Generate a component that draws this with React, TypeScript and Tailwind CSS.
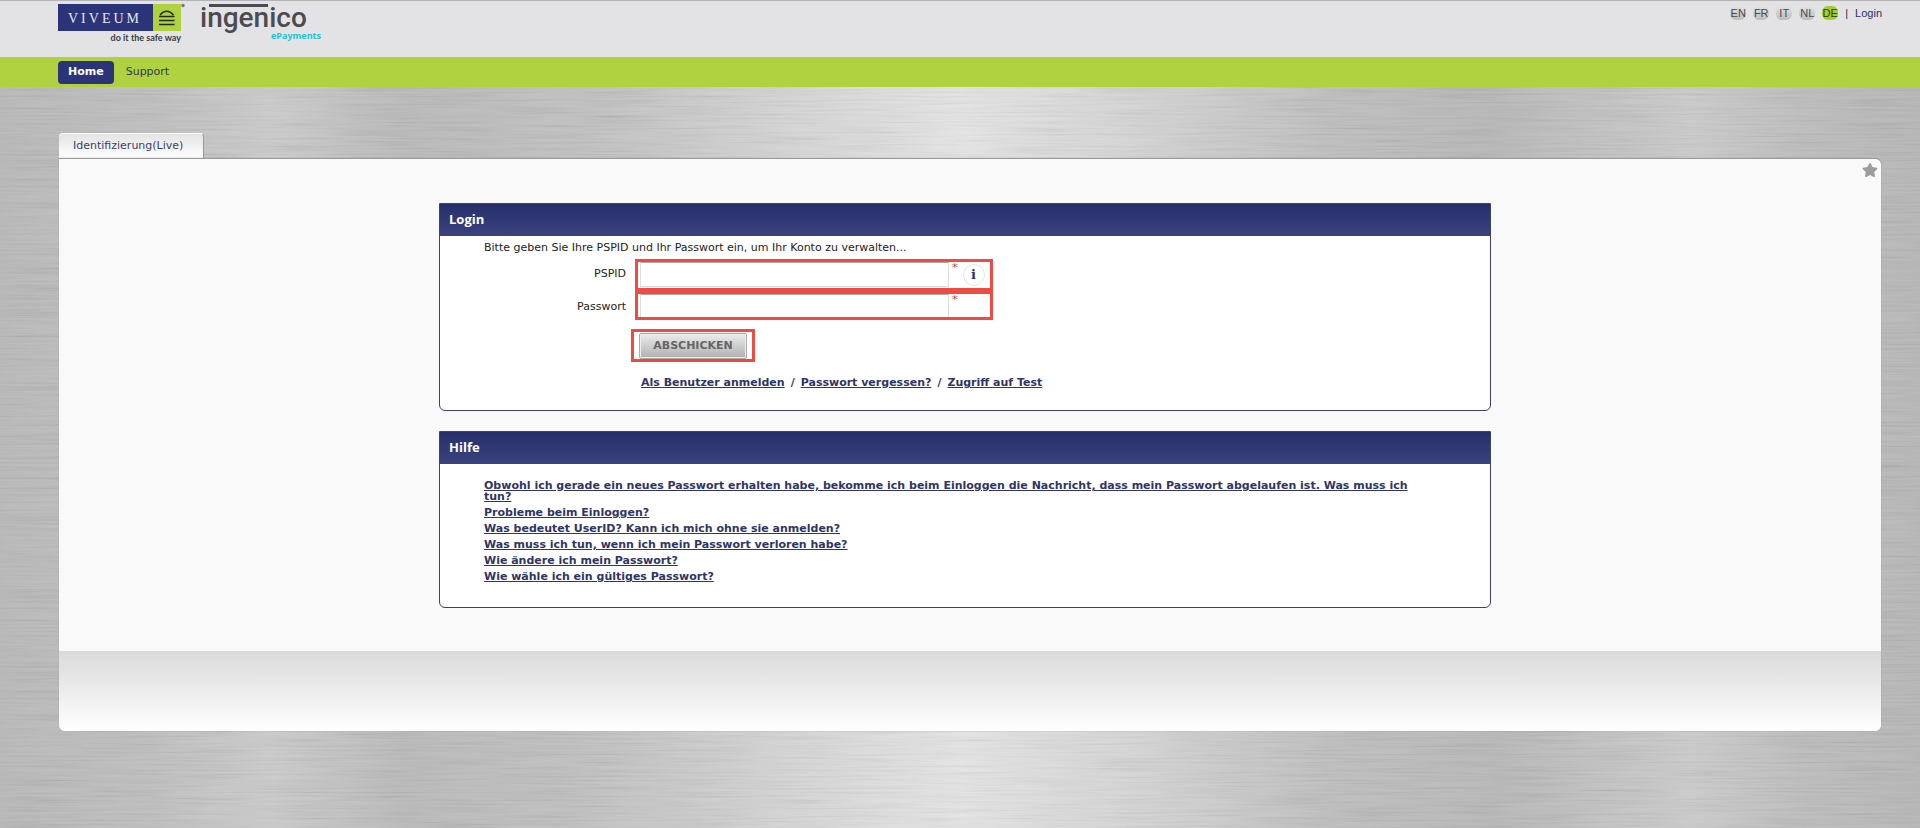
import type { ReactNode } from 'react'
import { FaStar } from 'react-icons/fa'

const languages = ['EN', 'FR', 'IT', 'NL', 'DE']

const questions = [
  'Obwohl ich gerade ein neues Passwort erhalten habe, bekomme ich beim Einloggen die Nachricht, dass mein Passwort abgelaufen ist. Was muss ich tun?',
  'Probleme beim Einloggen?',
  'Was bedeutet UserID? Kann ich mich ohne sie anmelden?',
  'Was muss ich tun, wenn ich mein Passwort verloren habe?',
  'Wie ändere ich mein Passwort?',
  'Wie wähle ich ein gültiges Passwort?',
]

function BrushedMetal() {
  return (
    <div className="absolute inset-0 -z-10 bg-[linear-gradient(90deg,#b6b6b6_0%,#bcbcbc_8%,#c8c8c8_14%,#b7b7b7_21%,#bebebe_31%,#d0d0d0_40%,#e2e2e2_50%,#d0d0d0_60%,#bcbcbc_69%,#b5b5b5_78%,#c8c8c8_88%,#bababa_94%,#b4b4b4_100%)]">
      <svg className="h-full w-full opacity-8" aria-hidden="true">
        <filter id="brush" x="0" y="0" width="100%" height="100%">
          <feTurbulence type="fractalNoise" baseFrequency="0.012 0.5" numOctaves="2" seed="4" />
          <feColorMatrix type="matrix" values="1.8 0 0 0 -0.2  1.8 0 0 0 -0.2  1.8 0 0 0 -0.2  0 0 0 0 1" />
        </filter>
        <rect width="100%" height="100%" filter="url(#brush)" />
      </svg>
    </div>
  )
}

function Logos() {
  return (
    <div className="flex gap-4">
      <svg width="127" height="42" viewBox="0 0 127 42" role="img" aria-label="Viveum">
        <rect x="0" y="1" width="95" height="27" fill="#2b3479" />
        <rect x="95" y="1" width="28" height="27" fill="#b1d240" />
        <text x="10" y="20" fontSize="14" letterSpacing="3" fill="#e6e8f2" fontFamily="Liberation Serif, serif">VIVEUM</text>
        <path d="M102 12Q108.500 4.500 115.500 12M101 13.500H116.500M101 17.500H116.500M101 21.500H116.500" stroke="#1d2a1c" strokeWidth="1.600" fill="none" />
        <circle cx="125" cy="2.500" r="1.700" fill="#777" />
        <text x="123" y="38" fontSize="9" fontWeight="700" fill="#3b3b3f" textAnchor="end" fontFamily="Lato, sans-serif">do it the safe way</text>
      </svg>
      <svg className="overflow-visible" width="124" height="42" viewBox="0 0 124 42" role="img" aria-label="ingenico ePayments">
        <text x="-1" y="24" fontSize="28" fontWeight="500" fill="#4b4b50" fontFamily="Roboto, sans-serif">ingenico</text>
        <rect x="8" y="1" width="59" height="3" fill="#4b4b50" />
        <text x="70" y="36" fontSize="9" fontWeight="700" fill="#22c2d4" fontFamily="Open Sans, sans-serif">ePayments</text>
      </svg>
    </div>
  )
}

function Card({ title, children }: { title: string; children: ReactNode }) {
  return (
    <section className="overflow-hidden rounded-b-md border border-[#3f4070] bg-white">
      <h2 className="h-8 bg-linear-to-b from-[#262e6b] to-[#3b4280] px-[9px] font-['Open_Sans',sans-serif] text-[13px] leading-[30px] font-bold text-white">
        {title}
      </h2>
      {children}
    </section>
  )
}

export default function App() {
  return (
    <div className="relative isolate flex min-h-screen flex-col font-['DejaVu_Sans',Verdana,sans-serif] text-[11px] text-[#222]">
      <BrushedMetal />

      <header className="flex h-[57px] items-start justify-between border-t border-[#b4b4b6] bg-[#e3e3e6] pt-[2px] pr-[38px] pl-[58px]">
        <Logos />
        <div className="flex items-center gap-[7px] pt-[2px] font-['Liberation_Sans',Arial,sans-serif] text-[#2c2f66]">
          {languages.map((code) => (
            <a
              key={code}
              href="#"
              className={
                code === 'DE'
                  ? 'flex h-[14px] w-4 items-center justify-center rounded-md bg-[#a6cb2c] text-[#2c3d14]'
                  : 'flex h-[14px] w-4 items-center justify-center rounded-md bg-linear-to-b from-[#e3e3e3] to-[#bcbcbc] text-[#4a4a4e]'
              }
            >
              {code}
            </a>
          ))}
          <span>|</span>
          <a href="#">Login</a>
        </div>
      </header>

      <nav className="flex h-[30px] items-center gap-3 bg-[#b1d240] pl-[58px]">
        <a href="#" className="flex h-[23px] items-center rounded bg-[#2b3479] px-[10px] font-bold text-white">Home</a>
        <a href="#" className="text-[#2e3a4a]">Support</a>
      </nav>

      <main className="pt-[46px] pr-[39px] pb-24 pl-[59px]">
        <a href="#" className="flex h-[25px] w-[145px] items-center rounded-t border-t border-r border-[#999] border-t-white bg-linear-to-b from-[#e4e4e4] to-[#f9f9f9] to-80% pl-[14px] text-[#39406b]">
          Identifizierung(Live)
        </a>

        <div className="relative overflow-hidden rounded-b-md rounded-tr-md border-t border-[#999] bg-[#f9f9f9] shadow-[0_0_1px_#777]">
          <button type="button" aria-label="Favorit" className="absolute top-[3px] right-[3px] text-[#9d9d9d]">
            <FaStar className="size-4" />
          </button>

          <div className="flex justify-center pt-11 pr-[10px] pb-[43px]">
            <div className="flex w-full max-w-[1052px] flex-col gap-5">
              <Card title="Login">
                <form className="px-11 pt-1 pb-[19px]" onSubmit={(e) => e.preventDefault()}>
                  <p className="leading-4">Bitte geben Sie Ihre PSPID und Ihr Passwort ein, um Ihr Konto zu verwalten...</p>
                  <div className="mt-[3px] grid w-[509px] grid-cols-[142px_1fr] gap-x-[9px]">
                    <label htmlFor="pspid" className="pt-[7px] text-right">PSPID</label>
                    <div className="flex h-8 items-start border-3 border-[#ee4b44] pl-[2px]">
                      <input id="pspid" className="h-[25px] w-[309px] border border-[#ddd] border-t-[#aaa] bg-white px-1" />
                      <span className="ml-[3px] leading-3 text-[#d33]">*</span>
                      <button type="button" aria-label="Info" className="mt-[2px] ml-[5px] flex size-[22px] items-center justify-center rounded-full border border-[#e4e4ea] font-['DejaVu_Serif',serif] text-[13px] font-bold text-[#2b2f6e]">i</button>
                    </div>
                    <label htmlFor="password" className="pt-2 text-right">Passwort</label>
                    <div className="flex h-[29px] items-start border-3 border-[#ee4b44] pl-[2px]">
                      <input id="password" type="password" className="h-[23px] w-[309px] border border-b-0 border-[#ddd] border-t-[#aaa] bg-white px-1" />
                      <span className="ml-[3px] leading-3 text-[#d33]">*</span>
                    </div>
                  </div>
                  <div className="mt-[9px] ml-[147px] flex h-[33px] w-[124px] items-center justify-center border-3 border-[#ee4b44]">
                    <button type="submit" className="h-[26px] w-[108px] rounded-xs border border-[#aaa] bg-linear-to-b from-[#ececec] to-[#b0b0b0] pt-[2px] font-bold text-[#666] shadow-[inset_0_0_0_1px_#eee]">ABSCHICKEN</button>
                  </div>
                  <p className="mt-[13px] ml-[157px] flex gap-[6px] leading-4 font-bold text-[#2f3566]">
                    <a href="#" className="underline">Als Benutzer anmelden</a>
                    <span>/</span>
                    <a href="#" className="underline">Passwort vergessen?</a>
                    <span>/</span>
                    <a href="#" className="underline">Zugriff auf Test</a>
                  </p>
                </form>
              </Card>

              <Card title="Hilfe">
                <ul className="flex flex-col gap-[5px] pt-4 pr-16 pb-[25px] pl-11 leading-[11px] font-bold text-[#2f3566]">
                  {questions.map((question) => (
                    <li key={question}>
                      <a href="#" className="underline">{question}</a>
                    </li>
                  ))}
                </ul>
              </Card>
            </div>
          </div>

          <footer className="h-20 bg-linear-to-b from-[#dadada] to-white" />
        </div>
      </main>
    </div>
  )
}
